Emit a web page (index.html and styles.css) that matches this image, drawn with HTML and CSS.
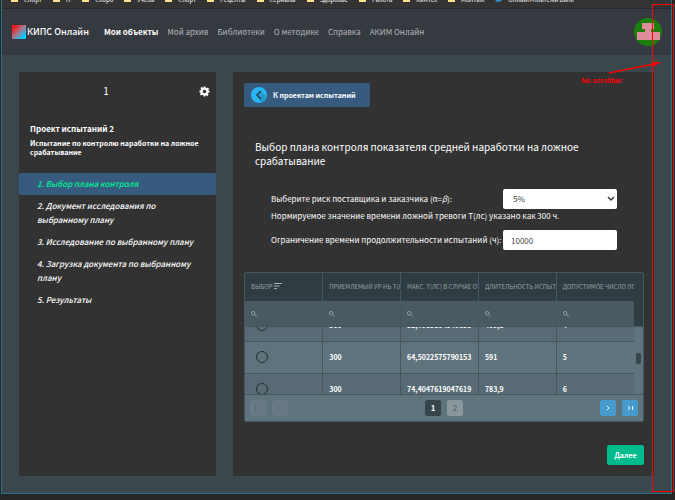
FILE: index.html
```html
<!DOCTYPE html>
<html lang="ru">
<head>
  <meta charset="UTF-8">
  <meta name="viewport" content="width=device-width, initial-scale=1.0">
  <title>КИПС Онлайн</title>
  <link rel="stylesheet" href="styles.css">
</head>
<body>
  <div class="window">
    <!-- закладки браузера -->
    <div class="bookmarks">
      <a href="#">Спорт</a>
      <a href="#">IT</a>
      <a href="#">Скоро</a>
      <a href="#">Учеба</a>
      <a href="#">Спорт</a>
      <a href="#">Рецепты</a>
      <a href="#">Сериалы</a>
      <a href="#">Здоровье</a>
      <a href="#">Работа</a>
      <a href="#">Химтех</a>
      <a href="#">Монтаж</a>
      <a href="#" class="site">Онлайн-платежи Банк</a>
    </div>

    <header class="navbar">
      <a href="#" class="brand"><span class="logo"></span>КИПС Онлайн</a>
      <nav>
        <a href="#" class="active">Мои объекты</a>
        <a href="#">Мой архив</a>
        <a href="#">Библиотеки</a>
        <a href="#">О методике</a>
        <a href="#">Справка</a>
        <a href="#">АКИМ Онлайн</a>
      </nav>
      <svg class="avatar" viewBox="0 0 28 28">
        <circle cx="14" cy="14" r="14" fill="#1b7f0e"/>
        <path d="M8 5h12v6h-3v3h9v8H3v-8h8v-3H8z" fill="#df8d9d"/>
      </svg>
    </header>

    <main class="page">
      <aside class="sidebar">
        <div class="object">
          <span class="number">1</span>
          <button class="settings" aria-label="Настройки">
            <svg viewBox="0 0 24 24"><path fill="#fff" fill-rule="evenodd" d="M10 1h4l.6 3.2 2 .8 2.700-1.900 2.800 2.800-1.900 2.700.8 2L23 10v4l-3.200.6-.8 2 1.900 2.700-2.800 2.800-2.700-1.900-2 .8L14 23h-4l-.6-3.200-2-.8-2.700 1.900-2.800-2.800 1.900-2.700-.8-2L1 14v-4l3.200-.6.800-2-1.900-2.700 2.800-2.800 2.700 1.900 2-.8zM12 8a4 4 0 1 0 0 8 4 4 0 0 0 0-8z"/></svg>
          </button>
        </div>
        <h2>Проект испытаний 2</h2>
        <p class="about">Испытание по контролю наработки на ложное срабатывание</p>
        <nav class="steps">
          <a href="#" class="current">1. Выбор плана контроля</a>
          <a href="#">2. Документ исследования по выбранному плану</a>
          <a href="#">3. Исследование по выбранному плану</a>
          <a href="#">4. Загрузка документа по выбранному плану</a>
          <a href="#">5. Результаты</a>
        </nav>
      </aside>

      <section class="content">
        <button class="back">
          <svg viewBox="0 0 16 16">
            <circle cx="8" cy="8" r="8" fill="#29b6f6"/>
            <path d="M10 4l5.500 5.500A8 8 0 0 1 10 15.700L6 8z" fill="#229acb"/>
            <path d="M9.800 4L5.800 8l4 4" fill="none" stroke="#263746" stroke-width="1.300"/>
          </svg>
          К проектам испытаний
        </button>

        <h1>Выбор плана контроля показателя средней наработки на ложное срабатывание</h1>

        <form class="params">
          <div class="field">
            <label for="risk">Выберите риск поставщика и заказчика (α=<i>β</i>):</label>
            <div class="select">
              <select id="risk"><option>5%</option></select>
              <svg viewBox="0 0 8 8"><path d="M1 2l3 3 3-3" fill="none" stroke="#343a40" stroke-width="1.500"/></svg>
            </div>
          </div>
          <p>Нормируемое значение времени ложной тревоги T(лс) указано как 300 ч.</p>
          <div class="field">
            <label for="limit">Ограничение времени продолжительности испытаний (ч):</label>
            <input id="limit" type="text" value="10000">
          </div>
        </form>

        <div class="grid">
          <div class="grid-head">
            <table>
              <thead>
                <tr>
                  <th>ВЫБОР <svg class="sort" viewBox="0 0 8 6"><path d="M0 .5h8M0 3h5.500M0 5.500h3" stroke="#a3afb4" fill="none"/></svg></th>
                  <th>ПРИЕМЛЕМЫЙ УР-НЬ T(ЛС)</th>
                  <th>МАКС. T(ЛС) В СЛУЧАЕ ОТКАЗА</th>
                  <th>ДЛИТЕЛЬНОСТЬ ИСПЫТАНИЙ</th>
                  <th>ДОПУСТИМОЕ ЧИСЛО ЛОЖНЫХ</th>
                </tr>
                <tr class="filters">
                  <td><svg viewBox="0 0 6 6"><path d="M3.700 3.700L5.700 5.700M4 2.200a1.800 1.800 0 1 1-3.600 0 1.800 1.800 0 0 1 3.600 0z" fill="none" stroke="#a3afb4" stroke-width=".8"/></svg></td>
                  <td><svg viewBox="0 0 6 6"><path d="M3.700 3.700L5.700 5.700M4 2.200a1.800 1.800 0 1 1-3.600 0 1.800 1.800 0 0 1 3.600 0z" fill="none" stroke="#a3afb4" stroke-width=".8"/></svg></td>
                  <td><svg viewBox="0 0 6 6"><path d="M3.700 3.700L5.700 5.700M4 2.200a1.800 1.800 0 1 1-3.600 0 1.800 1.800 0 0 1 3.600 0z" fill="none" stroke="#a3afb4" stroke-width=".8"/></svg></td>
                  <td><svg viewBox="0 0 6 6"><path d="M3.700 3.700L5.700 5.700M4 2.200a1.800 1.800 0 1 1-3.600 0 1.800 1.800 0 0 1 3.600 0z" fill="none" stroke="#a3afb4" stroke-width=".8"/></svg></td>
                  <td><svg viewBox="0 0 6 6"><path d="M3.700 3.700L5.700 5.700M4 2.200a1.800 1.800 0 1 1-3.600 0 1.800 1.800 0 0 1 3.600 0z" fill="none" stroke="#a3afb4" stroke-width=".8"/></svg></td>
                </tr>
              </thead>
            </table>
          </div>
          <!-- строки прокручены, верхняя и нижняя обрезаны -->
          <div class="grid-body">
            <table>
              <tbody>
                <tr>
                  <td><input type="radio" name="plan" aria-label="План 4"></td>
                  <td>300</td><td>52,7983104540653</td><td>409,8</td><td>4</td>
                </tr>
                <tr>
                  <td><input type="radio" name="plan" aria-label="План 5"></td>
                  <td>300</td><td>64,5022575790153</td><td>591</td><td>5</td>
                </tr>
                <tr>
                  <td><input type="radio" name="plan" aria-label="План 6"></td>
                  <td>300</td><td>74,4047619047619</td><td>783,9</td><td>6</td>
                </tr>
              </tbody>
            </table>
            <span class="thumb"></span>
          </div>
          <div class="pager">
            <div>
              <button class="off" aria-label="Первая" disabled><svg viewBox="0 0 8 8"><path d="M1.500 2v4M6 2L4 4l2 2"/></svg></button>
              <button class="off" aria-label="Предыдущая" disabled><svg viewBox="0 0 8 8"><path d="M5 2L3 4l2 2"/></svg></button>
            </div>
            <div>
              <button class="on">1</button>
              <button class="num">2</button>
            </div>
            <div>
              <button class="go" aria-label="Следующая"><svg viewBox="0 0 8 8"><path d="M3 2l2 2-2 2"/></svg></button>
              <button class="go" aria-label="Последняя"><svg viewBox="0 0 8 8"><path d="M2 2l2 2-2 2M6.500 2v4"/></svg></button>
            </div>
          </div>
        </div>

        <button class="next">Далее</button>
      </section>
    </main>
  </div>

  <!-- пометка красным -->
  <div class="frame"></div>
  <svg class="arrow" viewBox="0 0 54 14"><path d="M1 12L46 3" stroke="#f00" stroke-width="1.500"/><path d="M44 1l9 0-8 5z" fill="#f00"/></svg>
  <span class="note">No scrollbar</span>
</body>
</html>
```
FILE: styles.css
```css
* {
  box-sizing: border-box;
}

body {
  margin: 0;
  min-height: 100vh;
  display: flex;
  flex-direction: column;
  position: relative;
  overflow: hidden;
  padding: 0 3px 6px 1px;
  background: #262626;
  color: #fff;
  font-family: "Noto Sans CJK SC", "Noto Sans", sans-serif;
  font-size: 8px;
  line-height: 14px;
}

a {
  color: inherit;
  text-decoration: none;
}

button {
  border: none;
  padding: 0;
  font: inherit;
  color: #fff;
}

.window {
  flex: 1;
  display: flex;
  flex-direction: column;
  background: #3a474d;
  border: 1px solid #2a7186;
  border-top: none;
}

/* видна только нижняя кромка закладок */
.bookmarks {
  height: 9px;
  overflow: hidden;
  display: flex;
  align-items: flex-end;
  padding: 0 0 4px 9px;
  gap: 11px;
  background: #333;
  border-bottom: 1px solid #282828;
  white-space: nowrap;
  font-size: 6px;
}

.bookmarks a {
  display: flex;
  align-items: flex-end;
  gap: 6px;
  line-height: 8px;
}

.bookmarks a::before {
  content: "";
  width: 7px;
  height: 6px;
  margin-bottom: 2px;
  background: #ffe28a;
}

.bookmarks .site::before {
  background: #3a8bc4;
  border-radius: 50%;
}

/* верхнее меню */
.navbar {
  height: 46px;
  display: flex;
  align-items: center;
  padding: 0 9px 0 10px;
  background: #353940;
}

.brand {
  display: flex;
  align-items: center;
  gap: 1px;
  font-size: 9px;
  font-weight: 500;
}

.logo {
  width: 14px;
  height: 14px;
  background: linear-gradient(135deg, #f01818 15%, #a77990 50%, #00cfff 85%);
}

.navbar nav {
  display: flex;
  gap: 9px;
  margin-left: 15px;
  color: #b4b7ba;
}

.navbar .active {
  color: #fff;
  font-weight: 700;
}

.avatar {
  width: 28px;
  height: 28px;
  margin-left: auto;
}

.page {
  flex: 1;
  display: grid;
  grid-template-columns: 197px 1fr;
  gap: 17px;
  padding: 17px;
}

.sidebar,
.content {
  background: #323232;
}

/* левая колонка */
.object {
  display: flex;
  align-items: center;
  padding: 12px 6px 0 0;
}

.number {
  flex: 1;
  text-align: center;
  font-size: 10px;
}

.settings {
  width: 11px;
  height: 11px;
  margin-left: 6px;
  background: none;
}

.settings svg {
  display: block;
}

.sidebar h2 {
  margin: 25px 11px 4px;
  font-size: 8px;
  line-height: 12px;
}

.about {
  margin: 0 11px 16px;
  font-size: 7px;
  line-height: 9px;
  font-weight: 700;
}

.steps a {
  display: block;
  padding: 4px 18px;
  border-radius: 2px;
  font-style: italic;
  font-weight: 500;
}

.steps .current {
  background: #375a7f;
  color: #00f596;
}

/* правая колонка */
.content {
  min-width: 0;
  padding: 11px 10px 11px 11px;
  display: flex;
  flex-direction: column;
}

.back {
  align-self: flex-start;
  display: flex;
  align-items: center;
  gap: 6px;
  height: 24px;
  padding: 0 14px 0 7px;
  border-radius: 2px;
  background: #375a7f;
  font-size: 7px;
  font-weight: 700;
}

.back svg {
  width: 16px;
  height: 16px;
}

.content h1 {
  margin: 33px 11px 21px;
  font-size: 10px;
  line-height: 14px;
  font-weight: 400;
}

.params {
  margin: 0 27px 22px;
}

.field {
  display: grid;
  grid-template-columns: 232px 114px;
  align-items: center;
  white-space: nowrap;
}

.params p {
  margin: 0 0 7px;
}

.select {
  position: relative;
}

.select svg {
  position: absolute;
  right: 2px;
  top: 6px;
  width: 8px;
  height: 8px;
}

select,
input[type="text"] {
  width: 100%;
  height: 20px;
  padding: 0 8px;
  border: none;
  border-radius: 2px;
  background: #fff;
  color: #444;
  font: inherit;
  appearance: none;
}

select {
  padding: 0 10px;
}

/* таблица планов */
.grid {
  background: #5f737c;
  border: 1px solid #45565e;
  border-radius: 2px;
}

.grid table {
  width: calc(100% - 9px);
  table-layout: fixed;
  border-collapse: collapse;
}

.grid th,
.grid td {
  padding: 0 6px;
  overflow: hidden;
  white-space: nowrap;
  text-align: left;
  border-right: 1px solid #45565e;
}

.grid tr > :last-child {
  border-right: none;
}

.grid-head {
  background: #2f3c41;
}

.grid th {
  height: 28px;
  padding-right: 0;
  color: #97a2a7;
  font-size: 6px;
  font-weight: 400;
}

.sort {
  width: 8px;
  height: 6px;
}

.filters td {
  height: 25px;
  background: #4a5a62;
}

.filters svg {
  display: block;
  width: 6px;
  height: 6px;
}

.grid-body {
  position: relative;
  height: 69px;
  overflow: hidden;
  display: flex;
  align-items: center;
  border-top: 1px solid #45565e;
  border-bottom: 1px solid #45565e;
}

.grid-body td {
  height: 32px;
  font-size: 7px;
  font-weight: 700;
  border-bottom: 1px solid #45565e;
}

.grid-body tr:nth-child(odd) {
  background: #586b74;
}

.grid-body table {
  margin: -17px 0 -11px;
}

.grid-body input {
  appearance: none;
  display: block;
  width: 12px;
  height: 12px;
  margin: 0 5px;
  border: 1px solid #202b33;
  border-radius: 50%;
}

.thumb {
  position: absolute;
  right: 2px;
  top: 26px;
  width: 5px;
  height: 11px;
  border-radius: 2px;
  background: #36454c;
}

.pager {
  display: flex;
  justify-content: space-between;
  padding: 5px;
}

.pager div {
  display: flex;
  gap: 6px;
}

.pager button {
  width: 16px;
  height: 16px;
  border-radius: 2px;
}

.pager svg {
  display: block;
  width: 8px;
  height: 8px;
  margin: auto;
  fill: none;
  stroke: #fff;
  stroke-width: 1;
}

.pager .off {
  background: #687b84;
}

.pager .off svg {
  stroke: #56676f;
}

.pager .on {
  background: #37444a;
  font-weight: 700;
}

.pager .num {
  background: #8a979c;
  color: #4c5a61;
}

.pager .go {
  background: #459bcd;
}

.next {
  align-self: flex-end;
  width: 37px;
  height: 20px;
  margin-top: 23px;
  border-radius: 2px;
  background: #00bc8c;
  font-size: 7px;
  font-weight: 700;
}

/* пометка поверх окна */
.frame {
  position: absolute;
  top: 4px;
  right: 1px;
  bottom: 8px;
  width: 22px;
  border: 1px solid #f00;
}

.arrow {
  position: absolute;
  top: 61px;
  right: 13px;
  width: 54px;
  height: 14px;
}

.note {
  position: absolute;
  top: 74px;
  right: 53px;
  color: #f00;
  font-family: "Liberation Sans", sans-serif;
  font-size: 7px;
  font-weight: 700;
}
```
